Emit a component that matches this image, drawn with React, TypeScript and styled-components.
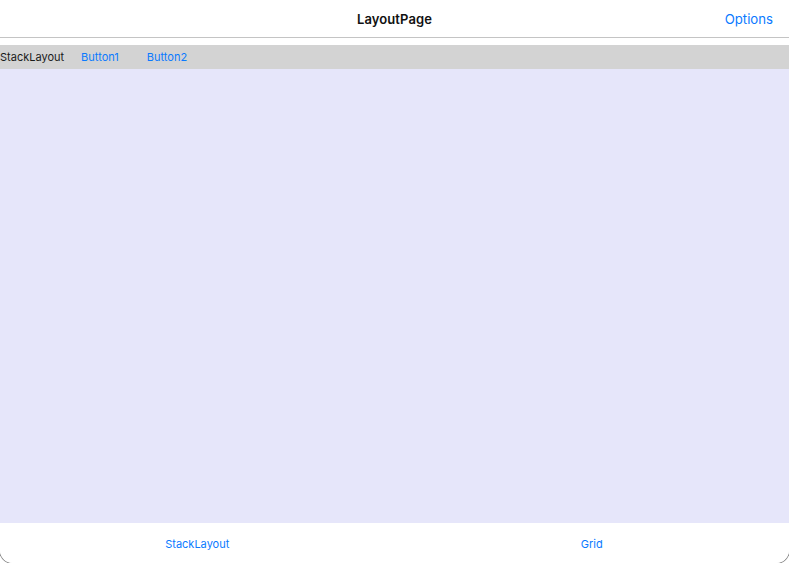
import React from "react"
import styled, { createGlobalStyle } from "styled-components"

const GlobalStyle = createGlobalStyle`
  html, body {
    margin: 0;
    padding: 0;
    background: #ffffff;
  }
  body {
    font-family: Inter, "Noto Sans", "Liberation Sans", sans-serif;
    overflow: hidden;
  }
`

const BLUE = "#0a7aff"

export default function App() {
  const tabs = ["StackLayout", "Grid"]

  return (
    <>
      <GlobalStyle />
      <Frame>
        <NavBar>
          <Title>LayoutPage</Title>
          <NavAction>Options</NavAction>
        </NavBar>
        <Page>
          <StackRow>
            <RowLabel>StackLayout</RowLabel>
            <RowButton>Button1</RowButton>
            <RowButton>Button2</RowButton>
          </StackRow>
          <Canvas />
        </Page>
        <TabBar>
          {tabs.map((t) => (
            <Tab key={t}>{t}</Tab>
          ))}
        </TabBar>
      </Frame>
    </>
  )
}

// window frame: left/right/bottom edges sit one pixel outside the viewport,
// so only the rounded bottom corners show
const Frame = styled.div`
  display: flex;
  flex-direction: column;
  box-sizing: border-box;
  width: 791px;
  height: 564px;
  margin-left: -1px;
  border: 1px solid #8e8e8e;
  border-top: none;
  border-radius: 0 0 14px 14px;
  overflow: hidden;
  background: #ffffff;
`

const NavBar = styled.div`
  position: relative;
  display: flex;
  align-items: center;
  justify-content: center;
  height: 37px;
  border-bottom: 1px solid #c4c4c4;
  flex-shrink: 0;
`

const Title = styled.div`
  font-size: 13px;
  font-weight: 600;
  color: #111111;
  letter-spacing: 0.1px;
`

const NavAction = styled.button`
  position: absolute;
  right: 16px;
  top: 50%;
  transform: translateY(-50%);
  border: none;
  background: none;
  padding: 0;
  font-family: inherit;
  font-size: 13.2px;
  color: ${BLUE};
`

const Page = styled.div`
  flex: 1;
  display: flex;
  flex-direction: column;
  padding-top: 7px;
`

const StackRow = styled.div`
  display: flex;
  align-items: center;
  height: 24px;
  background: #d3d3d3;
  flex-shrink: 0;
`

const RowLabel = styled.span`
  font-size: 11px;
  color: #1a1a1a;
  margin-right: 3px;
`

const RowButton = styled.button`
  border: none;
  background: none;
  padding: 0 14px;
  font-family: inherit;
  font-size: 11px;
  color: ${BLUE};
`

const Canvas = styled.div`
  flex: 1;
  background: #e6e6fa;
`

const TabBar = styled.div`
  display: flex;
  height: 40px;
  flex-shrink: 0;
  background: #ffffff;
`

const Tab = styled.div`
  flex: 1;
  display: flex;
  align-items: center;
  justify-content: center;
  padding-top: 2px;
  font-size: 11px;
  color: ${BLUE};
`
